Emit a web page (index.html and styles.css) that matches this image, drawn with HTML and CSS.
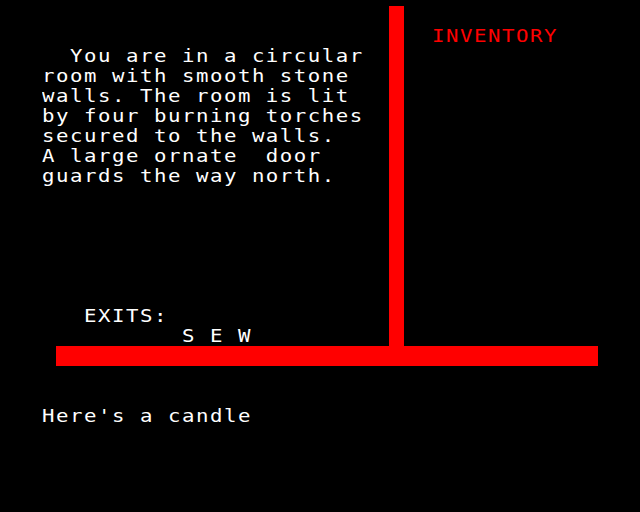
FILE: index.html
```html
<!DOCTYPE html>
<html>
<head>
<meta charset="utf-8">
<link rel="stylesheet" href="styles.css">
</head>
<body>
<div class="screen">
  <div class="top">
    <div class="room">
      <div class="desc txt">  You are in a circular
room with smooth stone
walls. The room is lit
by four burning torches
secured to the walls.
A large ornate  door
guards the way north.</div>
      <div class="exits txt">   EXITS:
          S E W</div>
    </div>
    <div class="vbar"></div>
    <div class="inv">
      <div class="inv-title txt">INVENTORY</div>
    </div>
  </div>
  <div class="hbar"></div>
  <div class="message">
    <div class="txt">Here's a candle</div>
  </div>
</div>
</body>
</html>
```
FILE: styles.css
```css
html, body {
  margin: 0;
  padding: 0;
  background: #000;
}
.screen {
  width: 640px;
  height: 512px;
  background: #000;
  color: #fff;
  font-family: "DejaVu Sans Mono", monospace;
  font-size: 18px;
  line-height: 20px;
  overflow: hidden;
}
.txt {
  white-space: pre;
  letter-spacing: 1.33px;
  transform: scaleX(1.15);
  transform-origin: 0 0;
}
.top {
  display: flex;
  height: 340px;
  margin-top: 6px;
}
.room {
  width: 347px;
  padding-left: 42px;
  display: flex;
  flex-direction: column;
  justify-content: space-between;
}
.desc {
  padding-top: 40px;
}
.vbar {
  width: 15px;
  background: #ff0000;
}
.inv {
  flex: 1;
  padding-left: 28px;
  padding-top: 20px;
}
.inv-title {
  color: #ff0000;
}
.hbar {
  margin-left: 56px;
  width: 542px;
  height: 20px;
  background: #ff0000;
}
.message {
  margin-top: 40px;
  padding-left: 42px;
}
```
